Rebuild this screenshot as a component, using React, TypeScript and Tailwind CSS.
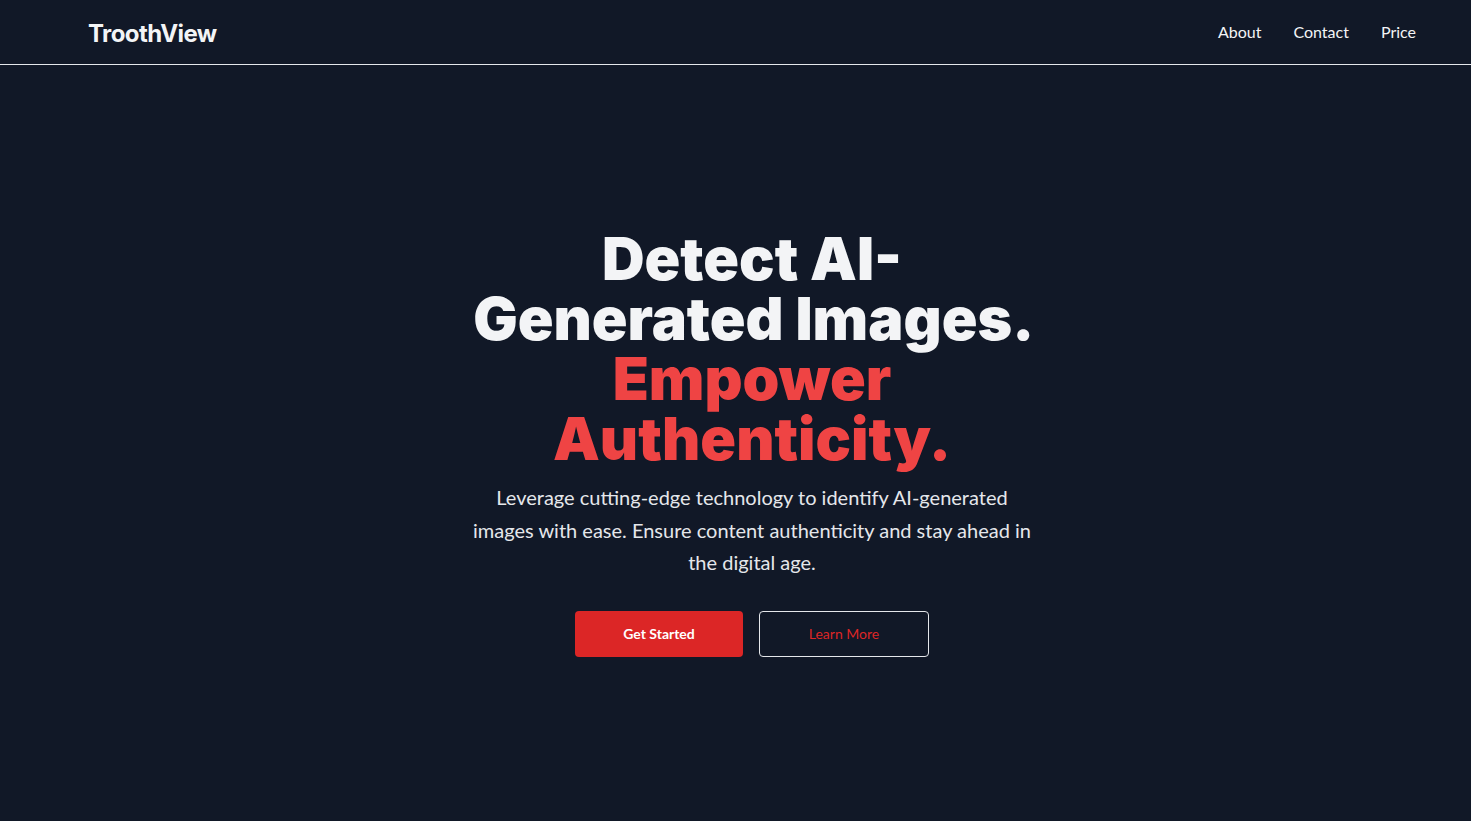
export default function App() {
  return (
    <div className="min-h-screen bg-[#111827] text-[#f3f4f6] flex flex-col font-['Lato','Liberation_Sans',sans-serif]">
      {/* Navbar */}
      <header className="h-[65px] border-b border-[#e5e7eb] flex items-center justify-between pl-[88px] pr-[55px]">
        <a href="#" className="mt-1 text-2xl font-bold text-[#f3f4f6] font-['Inter',sans-serif] tracking-tight">
          TroothView
        </a>
        <nav className="flex items-center gap-8 text-base text-[#f3f4f6]">
          <a href="#">About</a>
          <a href="#">Contact</a>
          <a href="#">Price</a>
        </nav>
      </header>

      {/* Hero */}
      <main className="flex-1 flex items-center justify-center pl-[33px]">
        <div className="flex flex-col items-center text-center max-w-xl">
          <h1 className="text-[59px] leading-[60px] font-black text-[#f3f4f6] font-['Inter',sans-serif]">
            Detect AI-Generated Images.{" "}
            <span className="text-[#ef4444]">Empower Authenticity.</span>
          </h1>
          <p className="mt-3 max-w-[566px] text-xl leading-relaxed text-[#e5e7eb]">
            Leverage cutting-edge technology to identify AI-generated images
            with ease. Ensure content authenticity and stay ahead in the digital
            age.
          </p>
          <div className="mt-8 flex gap-4">
            <button className="w-[168px] h-[46px] rounded bg-[#dc2626] text-white text-sm font-bold">
              Get Started
            </button>
            <button className="w-[170px] h-[46px] rounded border border-[#e5e7eb] text-[#dc2626] text-sm">
              Learn More
            </button>
          </div>
        </div>
      </main>
    </div>
  );
}
